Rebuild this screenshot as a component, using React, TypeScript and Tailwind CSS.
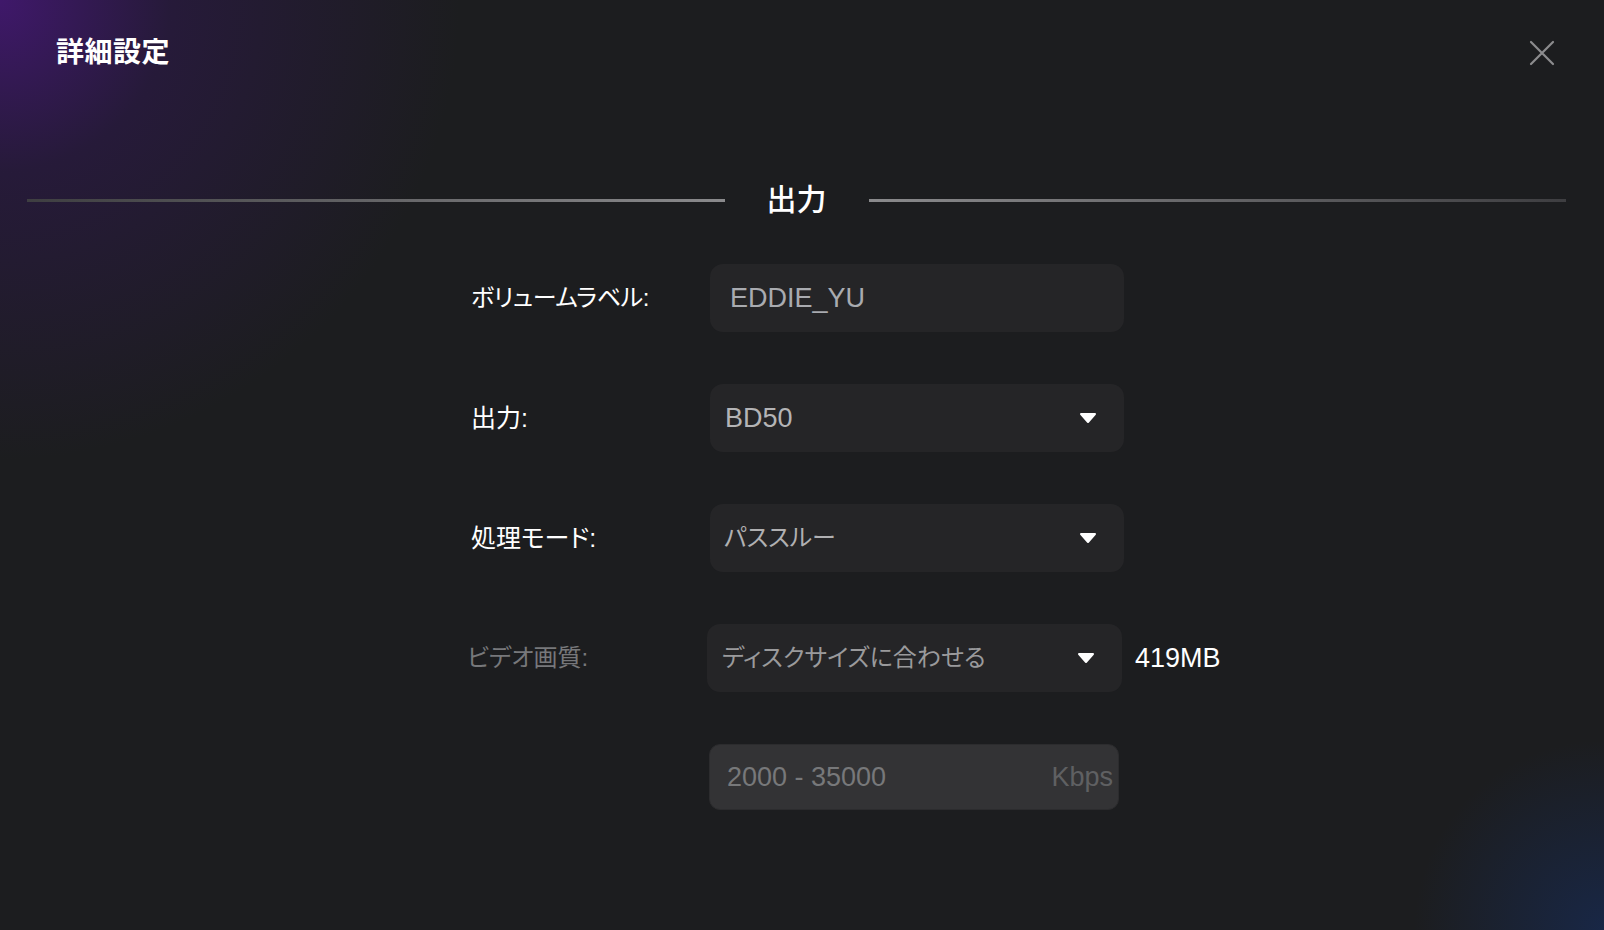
import React from "react";

const Caret = () => (
  <svg width="18" height="12" viewBox="0 0 18 12" className="shrink-0">
    <polygon points="2,2 16,2 9,10" fill="#ffffff" stroke="#ffffff" strokeWidth="2" strokeLinejoin="round" />
  </svg>
);

export default function App() {
  return (
    <div className="w-[1604px] h-[930px] overflow-hidden flex flex-col bg-[#1c1d1f] bg-[radial-gradient(circle_at_0_0,rgba(64,24,108,0.98)_0px,rgba(45,24,75,0.6)_170px,rgba(28,29,31,0)_460px),radial-gradient(circle_at_100%_100%,rgba(24,40,74,0.9)_0px,rgba(28,29,31,0)_190px)] font-['Liberation_Sans','Noto_Sans_CJK_JP',sans-serif] text-white">
      {/* Header */}
      <div className="h-[106px] shrink-0 flex items-center justify-between pl-[56px] pr-[49px]">
        <div className="text-[28px] font-bold tracking-[0.5px] leading-none">詳細設定</div>
        <button className="w-[26px] h-[26px] flex items-center justify-center">
          <svg width="26" height="26" viewBox="0 0 26 26">
            <path d="M2 2 L24 24 M24 2 L2 24" stroke="#8c8c8e" strokeWidth="2.2" strokeLinecap="round" />
          </svg>
        </button>
      </div>

      {/* Section divider */}
      <div className="mt-[74px] h-[40px] shrink-0 flex items-center pl-[27px] pr-[38px]">
        <div className="flex-1 h-[3px] bg-[linear-gradient(to_right,#3e3e41,#8a8a8c)]" />
        <div className="mx-[42px] text-[30px] font-medium leading-none [font-feature-settings:'palt']">出力</div>
        <div className="flex-1 h-[3px] bg-[linear-gradient(to_right,#8a8a8c,#3e3e41)]" />
      </div>

      {/* Form */}
      <div className="mt-[44px] ml-[471px] flex flex-col gap-[52px]">
        <div className="flex items-center h-[68px]">
          <div className="w-[239px] text-[24px] leading-none text-white tracking-[-0.4px] [font-feature-settings:'palt']">ボリュームラベル:</div>
          <div className="w-[414px] h-[68px] rounded-[13px] bg-[#252527] flex items-center pl-[20px]">
            <span className="text-[27px] leading-none text-[#a9abb0]">EDDIE_YU</span>
          </div>
        </div>

        <div className="flex items-center h-[68px]">
          <div className="w-[239px] text-[25px] leading-none text-white [font-feature-settings:'palt']">出力:</div>
          <div className="w-[414px] h-[68px] rounded-[13px] bg-[#252527] flex items-center justify-between pl-[15px] pr-[27px]">
            <span className="text-[27px] leading-none text-[#b4b4b6]">BD50</span>
            <Caret />
          </div>
        </div>

        <div className="flex items-center h-[68px]">
          <div className="w-[239px] text-[25px] leading-none text-white [font-feature-settings:'palt']">処理モード:</div>
          <div className="w-[414px] h-[68px] rounded-[13px] bg-[#252527] flex items-center justify-between pl-[14px] pr-[27px]">
            <span className="text-[24px] leading-none text-[#b0b0b2] [font-feature-settings:'palt']">パススルー</span>
            <Caret />
          </div>
        </div>

        <div className="flex items-center h-[68px] -ml-[4px]">
          <div className="w-[240px] text-[24px] leading-none text-[#77787b] [font-feature-settings:'palt']">ビデオ画質:</div>
          <div className="w-[415px] h-[68px] rounded-[13px] bg-[#252527] flex items-center justify-between pl-[15px] pr-[27px]">
            <span className="text-[24px] leading-none text-[#9a9a9c] [font-feature-settings:'palt']">ディスクサイズに合わせる</span>
            <Caret />
          </div>
          <span className="ml-[13px] text-[27px] leading-none text-white">419MB</span>
        </div>

        <div className="flex items-center h-[66px]">
          <div className="w-[238px]" />
          <div className="w-[410px] h-[66px] rounded-[11px] bg-[#333335] border border-[#2c2c2e] flex items-center justify-between pl-[17px] pr-[5px]">
            <span className="text-[27px] leading-none text-[#77787a]">2000 - 35000</span>
            <span className="text-[27px] leading-none text-[#5f6062]">Kbps</span>
          </div>
        </div>
      </div>
    </div>
  );
}
